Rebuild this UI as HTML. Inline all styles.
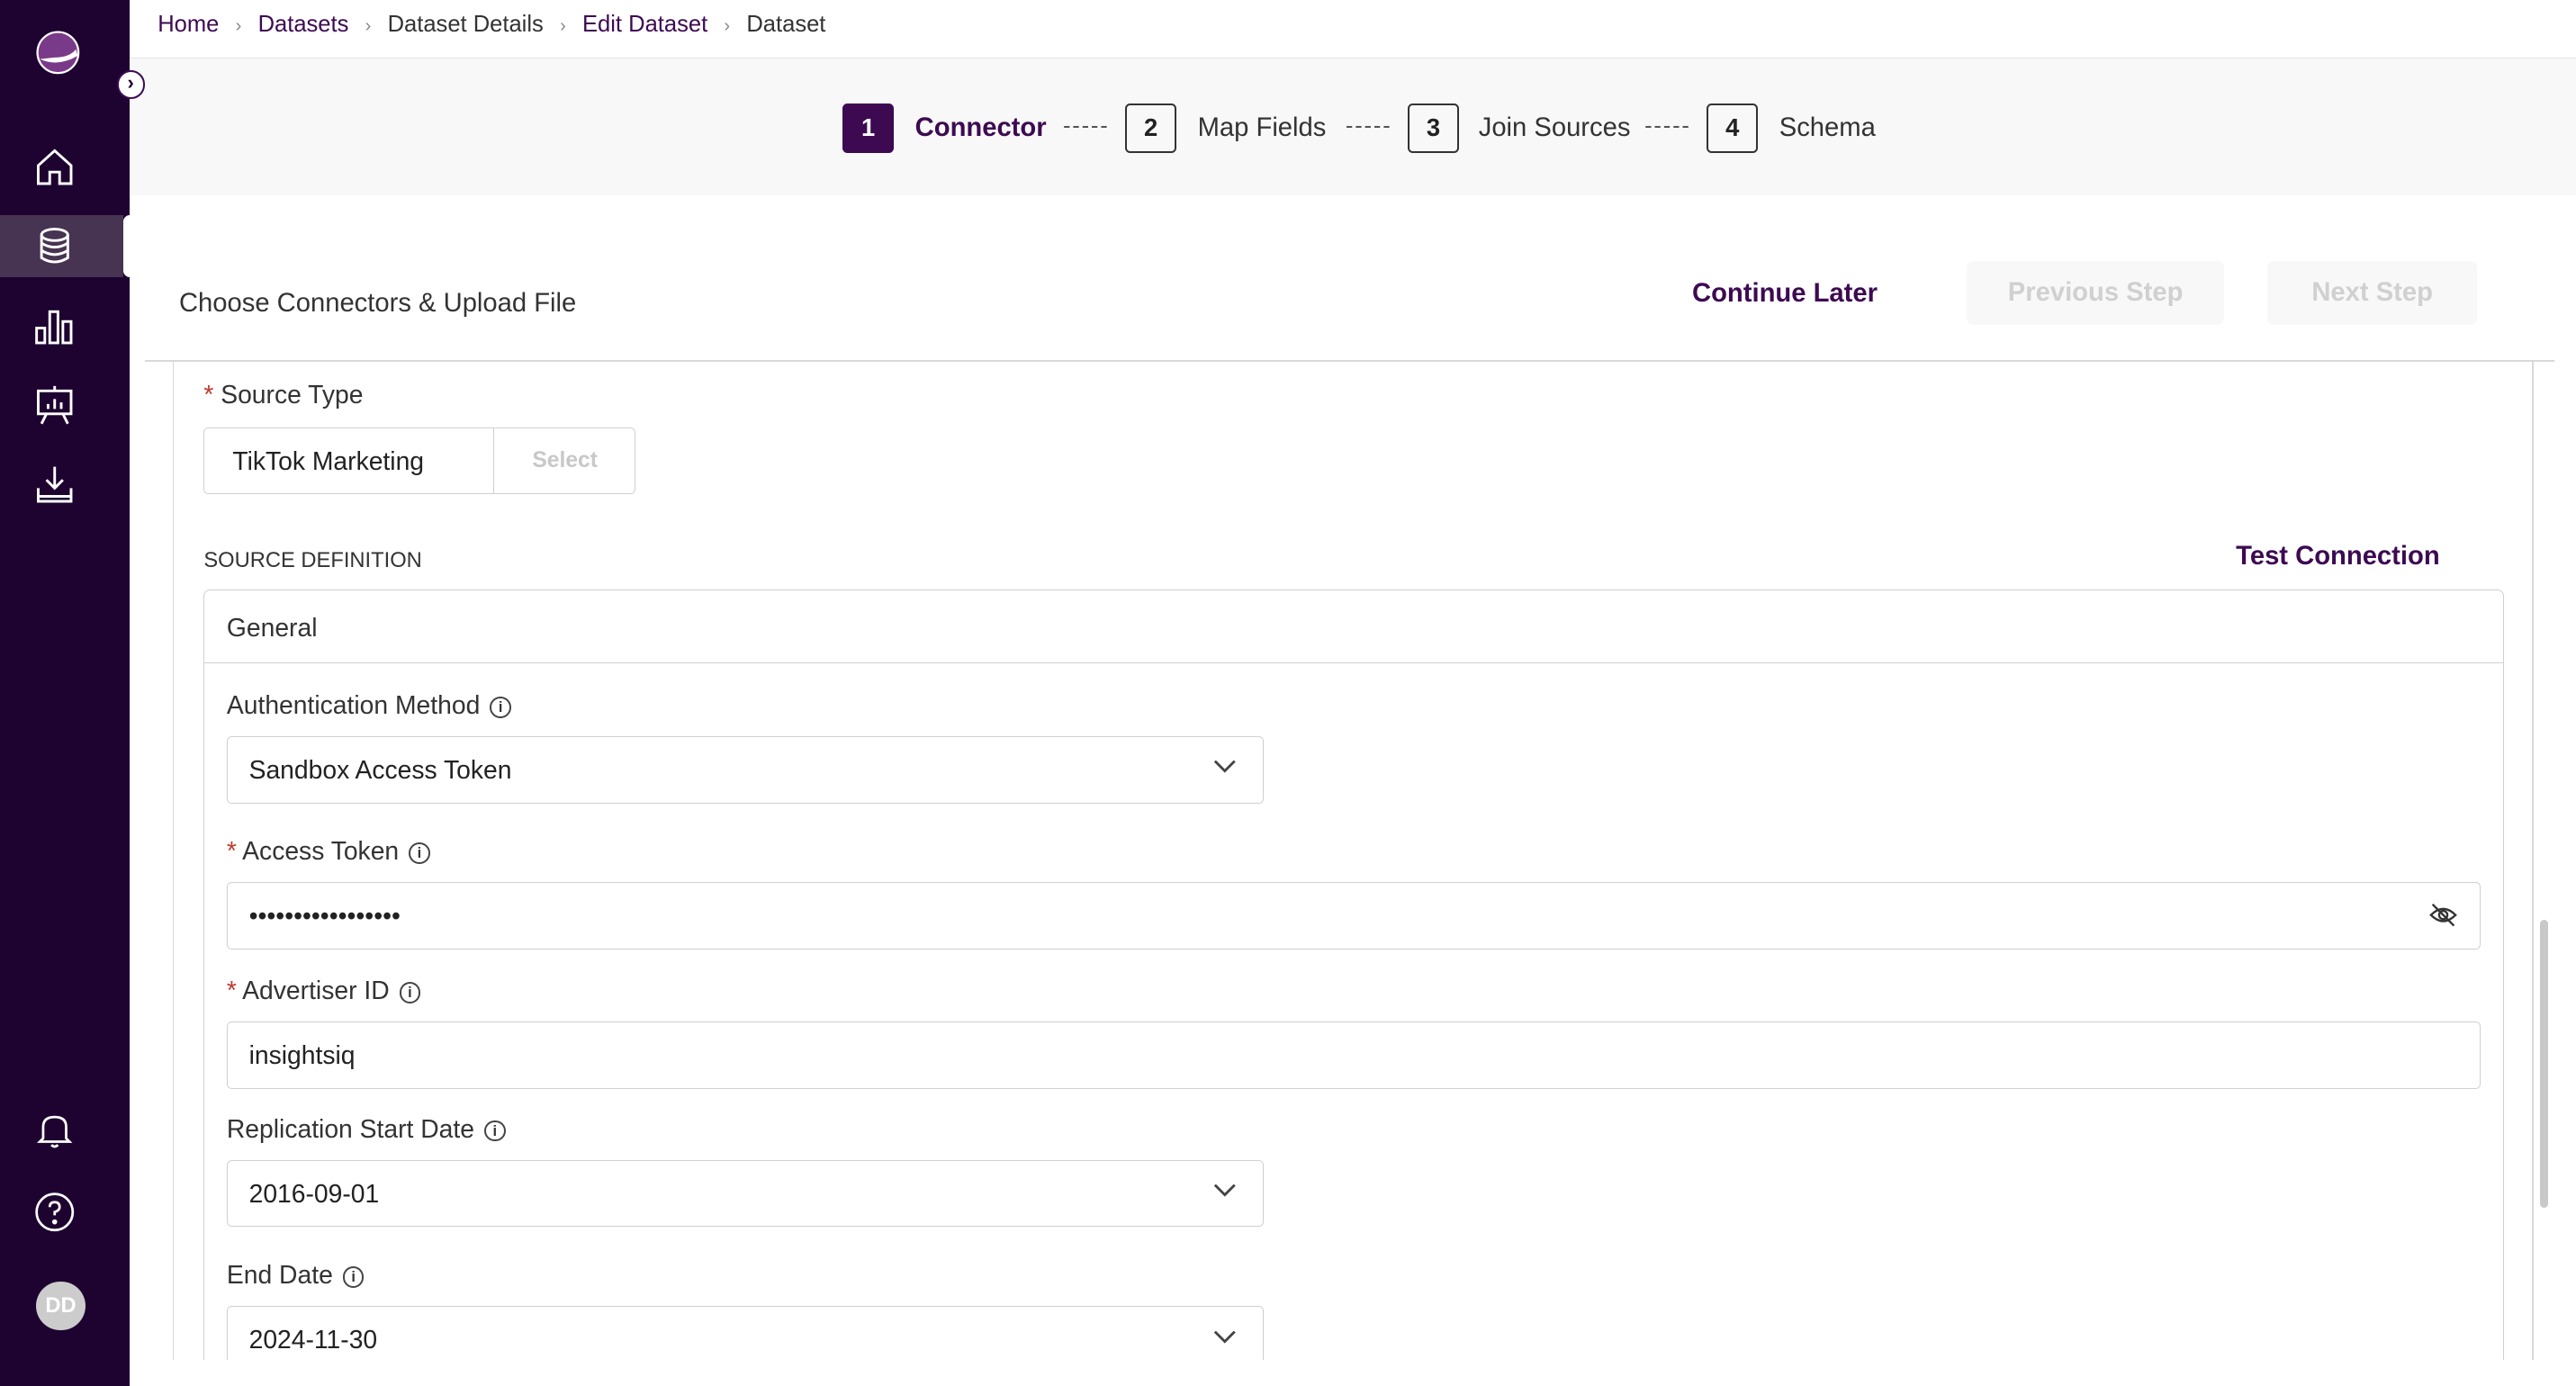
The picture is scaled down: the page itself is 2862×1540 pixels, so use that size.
<!DOCTYPE html>
<html><head><meta charset="utf-8"><style>
*{box-sizing:border-box;margin:0;padding:0}
html,body{width:2862px;height:1540px;overflow:hidden;background:#fff}
#r{zoom:1.82526;width:1568px;height:844px;position:relative;font-family:"Liberation Sans",sans-serif;color:#222}
.a{position:absolute}
.sb{left:0;top:0;width:79px;height:844px;background:#1e0330}
.ic{position:absolute;left:20px;width:26px;height:26px}
.bc{left:96px;top:7px;font-size:14px;color:#333}
.bc b{font-weight:normal;color:#3d0a52}
.bc i{font-style:normal;color:#888;margin:0 10px;font-size:11px}
.step{top:63px;width:31px;height:30px;border:1.5px solid #333;border-radius:3px;text-align:center;line-height:27px;font-size:15px;font-weight:bold}
.sl{top:69px;font-size:16px;color:#333}
.dash{top:69px;font-size:14px;color:#555;letter-spacing:1px}
.inp{border:1px solid #d0d0d0;border-radius:3px;background:#fff;font-size:15.5px;padding-left:13px;line-height:40px;height:41px}
.lab{font-size:15.5px;color:#333}
.req{color:#c0392b}
.info{display:inline-block;width:13px;height:13px;border:1.2px solid #444;border-radius:50%;font-size:9px;text-align:center;line-height:11px;vertical-align:1px;margin-left:6px;font-weight:bold}
.chev{position:absolute;right:16px;top:13px}
</style></head><body><div id="r">
<div class="a sb"></div>
<div class="a" style="left:0;top:131px;width:75px;height:38px;background:#473352"></div>
<div class="a" style="left:75px;top:131px;width:6px;height:38px;background:#fff;border-radius:4px 0 0 4px"></div>
<svg class="a" style="left:20px;top:17px" width="30" height="30" viewBox="0 0 30 30"><circle cx="15" cy="15" r="12.5" fill="#7a3a8a" stroke="#fff" stroke-width="1.2"/><path d="M4 19 Q15 24 27 17 L26 13 Q22 18 13 18 Z" fill="#fff"/></svg>
<svg class="ic" style="top:89px" viewBox="0 0 26 26" fill="none" stroke="#fff" stroke-width="1.6"><path d="M3 12 L13 3 L23 12 V23 H16 V16 H10 V23 H3 Z"/></svg>
<svg class="ic" style="top:137px" viewBox="0 0 26 26" fill="none" stroke="#fff" stroke-width="1.6"><ellipse cx="13" cy="6" rx="8" ry="3.5"/><path d="M5 6 V20 Q13 25 21 20 V6 M5 11 Q13 16 21 11 M5 15.5 Q13 20.5 21 15.5"/></svg>
<svg class="ic" style="top:186px" viewBox="0 0 26 26" fill="none" stroke="#fff" stroke-width="1.6"><rect x="2" y="14" width="5" height="9"/><rect x="10" y="4" width="5" height="19"/><rect x="18" y="10" width="5" height="13"/></svg>
<svg class="ic" style="top:234px" viewBox="0 0 26 26" fill="none" stroke="#fff" stroke-width="1.6"><path d="M13 1 V4 M3 4 H23 V18 H3 Z M8 18 L5 24 M18 18 L21 24 M9 15 V12 M13 15 V9 M17 15 V11"/></svg>
<svg class="ic" style="top:282px" viewBox="0 0 26 26" fill="none" stroke="#fff" stroke-width="1.6"><path d="M13 2 V15 M8 10 L13 15 L18 10 M3 15 V23 H23 V15 M3 20 H23"/></svg>
<svg class="ic" style="top:675px" viewBox="0 0 26 26" fill="none" stroke="#fff" stroke-width="1.5"><path d="M6 18 V11 Q6 5 13 5 Q20 5 20 11 V18 L22 20 H4 Z M11 22 Q13 24 15 22"/></svg>
<svg class="ic" style="top:725px" viewBox="0 0 26 26" fill="none" stroke="#fff" stroke-width="1.5"><circle cx="13" cy="13" r="11"/><path d="M10 10 Q10 7 13 7 Q16 7 16 10 Q16 12 13 13 V15"/><circle cx="13" cy="19" r="0.8" fill="#fff"/></svg>
<div class="a" style="left:22px;top:780px;width:30px;height:30px;border-radius:50%;background:#ccc;color:#fff;font-weight:bold;font-size:13px;text-align:center;line-height:30px">DD</div>

<div class="a bc"><b>Home</b><i>›</i><b>Datasets</b><i>›</i>Dataset Details<i>›</i><b>Edit Dataset</b><i>›</i>Dataset</div>
<div class="a" style="left:79px;top:35px;width:1489px;height:84px;background:#f8f8f8;border-top:1px solid #e2e2e2"></div>
<div class="a" style="left:71px;top:43px;width:17px;height:17px;border-radius:50%;background:#fff;border:1.5px solid #3d0a52;font-size:12px;text-align:center;line-height:13px;color:#1e0330;font-weight:bold">›</div>
<div class="a step" style="left:513px;background:#3d0a52;border-color:#3d0a52;color:#fff">1</div>
<div class="a sl" style="left:557px;color:#3d0a52;font-weight:bold">Connector</div>
<div class="a dash" style="left:647px">-----</div>
<div class="a step" style="left:685px">2</div>
<div class="a sl" style="left:729px">Map Fields</div>
<div class="a dash" style="left:819px">-----</div>
<div class="a step" style="left:857px">3</div>
<div class="a sl" style="left:900px">Join Sources</div>
<div class="a dash" style="left:1001px">-----</div>
<div class="a step" style="left:1039px">4</div>
<div class="a sl" style="left:1083px">Schema</div>

<div class="a" style="left:109px;top:176px;font-size:16px;color:#333">Choose Connectors &amp; Upload File</div>
<div class="a" style="left:1030px;top:170px;font-size:16px;font-weight:bold;color:#3d0a52">Continue Later</div>
<div class="a" style="left:1197px;top:159px;width:157px;height:39px;background:#f8f8f8;border-radius:4px;color:#d0d0d0;font-weight:bold;font-size:16px;text-align:center;line-height:39px">Previous Step</div>
<div class="a" style="left:1380px;top:159px;width:128px;height:39px;background:#f8f8f8;border-radius:4px;color:#d0d0d0;font-weight:bold;font-size:16px;text-align:center;line-height:39px">Next Step</div>
<div class="a" style="left:88px;top:219px;width:1467px;height:1px;background:#d8d8d8"></div>
<div class="a" style="left:105px;top:219px;width:1px;height:610px;background:#d8d8d8"></div>
<div class="a" style="left:1541px;top:219px;width:1px;height:610px;background:#d8d8d8"></div>
<div class="a" style="left:1546px;top:560px;width:5px;height:175px;background:#c8c8c8;border-radius:3px"></div>

<div class="a lab" style="left:124px;top:231px"><span class="req">*</span> Source Type</div>
<div class="a inp" style="left:124px;top:260px;width:263px;padding-left:17px">TikTok Marketing</div>
<div class="a" style="left:300px;top:261px;width:1px;height:39px;background:#d0d0d0"></div>
<div class="a" style="left:324px;top:273px;font-size:13.5px;color:#c8c8c8;font-weight:bold">Select</div>

<div class="a" style="left:124px;top:334px;font-size:13px;color:#333">SOURCE DEFINITION</div>
<div class="a" style="left:1361px;top:330px;font-size:16px;font-weight:bold;color:#3d0a52">Test Connection</div>
<div class="a" style="left:124px;top:359px;width:1400px;height:480px;border:1px solid #d0d0d0;border-radius:4px"></div>
<div class="a" style="left:124px;top:403px;width:1400px;height:1px;background:#d0d0d0"></div>
<div class="a lab" style="left:138px;top:373px">General</div>

<div class="a lab" style="left:138px;top:420px">Authentication Method<span class="info">i</span></div>
<div class="a inp" style="left:138px;top:448px;width:631px">Sandbox Access Token<svg class="chev" width="14" height="10" viewBox="0 0 14 10"><path d="M1 2 L7 8 L13 2" fill="none" stroke="#444" stroke-width="1.6"/></svg></div>
<div class="a lab" style="left:138px;top:509px"><span class="req">*</span> Access Token<span class="info">i</span></div>
<div class="a inp" style="left:138px;top:537px;width:1372px;letter-spacing:0">•••••••••••••••••<svg class="a" style="right:14px;top:12px" width="17" height="15" viewBox="0 0 17 15" fill="none" stroke="#333" stroke-width="1.3"><path d="M1 7.5 Q8.5 0 16 7.5 Q8.5 15 1 7.5 Z"/><circle cx="8.5" cy="7.5" r="2.5"/><path d="M2 1 L15 14"/></svg></div>
<div class="a lab" style="left:138px;top:594px"><span class="req">*</span> Advertiser ID<span class="info">i</span></div>
<div class="a inp" style="left:138px;top:622px;width:1372px">insightsiq</div>
<div class="a lab" style="left:138px;top:678px">Replication Start Date<span class="info">i</span></div>
<div class="a inp" style="left:138px;top:706px;width:631px">2016-09-01<svg class="chev" width="14" height="10" viewBox="0 0 14 10"><path d="M1 2 L7 8 L13 2" fill="none" stroke="#444" stroke-width="1.6"/></svg></div>
<div class="a lab" style="left:138px;top:767px">End Date<span class="info">i</span></div>
<div class="a inp" style="left:138px;top:795px;width:631px">2024-11-30<svg class="chev" width="14" height="10" viewBox="0 0 14 10"><path d="M1 2 L7 8 L13 2" fill="none" stroke="#444" stroke-width="1.6"/></svg></div>
<div class="a" style="left:79px;top:828px;width:1489px;height:16px;background:#fff"></div>
</div></body></html>
